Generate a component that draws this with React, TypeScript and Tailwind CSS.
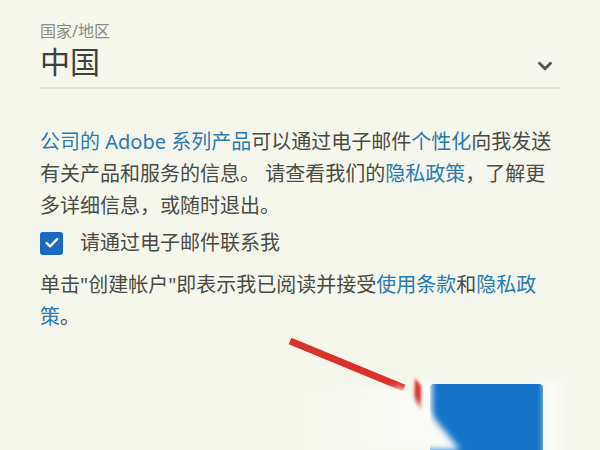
import { ChevronDown, Check } from "lucide-react";

const font = { fontFamily: '"Noto Sans", "Noto Sans CJK SC", sans-serif' };

export default function App() {
  return (
    <div
      className="relative w-[600px] h-[450px] overflow-hidden bg-[#f5f7ec] text-[#4a4b46]"
      style={font}
    >
      <div className="px-10 pt-[21px]">
        {/* country select */}
        <div className="border-b-2 border-[#e3e4da]">
          <div className="text-[16px] leading-[20px] text-[#8a8b85]">国家/地区</div>
          <div className="flex items-center justify-between h-[46px] pb-[4px]">
            <span className="text-[30px] leading-[36px] text-[#3f403b]">中国</span>
            <ChevronDown className="w-[22px] h-[22px] mr-[4px] mt-[8px] text-[#55564f]" strokeWidth={3.2} />
          </div>
        </div>

        <p className="mt-[37px] w-[512px] text-[20px] leading-[32px]">
          <span className="text-[#2b7ab0]">公司的 Adobe 系列产品</span>可以通过电子邮件
          <span className="text-[#2b7ab0]">个性化</span>向我发送有关产品和服务的信息。 请查看我们的
          <span className="text-[#2b7ab0]">隐私政策</span>，了解更多详细信息，或随时退出。
        </p>

        <label className="mt-[9px] flex items-center gap-[17px] text-[20px] leading-[24px]">
          <span className="w-[23px] h-[23px] rounded-[3px] bg-[#1a6bc0] flex items-center justify-center">
            <Check className="w-[16px] h-[16px] text-white" strokeWidth={3.5} />
          </span>
          请通过电子邮件联系我
        </label>

        <p className="mt-[14px] w-[512px] text-[20px] leading-[32px]">
          单击"创建帐户"即表示我已阅读并接受<span className="text-[#2b7ab0]">使用条款</span>和
          <span className="text-[#2b7ab0]">隐私政策</span>。
        </p>

        <div className="mt-[51px] flex justify-end pr-[17px]">
          <button className="w-[113px] h-[80px] rounded-t-[4px] bg-[#1573c8]" />
        </div>
      </div>

      {/* annotation arrow + glare over the button */}
      <svg className="absolute inset-0 pointer-events-none" width="600" height="450">
        <defs>
          <filter id="blur" x="-50%" y="-50%" width="200%" height="200%">
            <feGaussianBlur stdDeviation="3" />
          </filter>
          <filter id="blur2" x="-50%" y="-50%" width="200%" height="200%">
            <feGaussianBlur stdDeviation="1.5" />
          </filter>
          <linearGradient id="fade" x1="300" y1="0" x2="400" y2="0" gradientUnits="userSpaceOnUse">
            <stop offset="0" stopColor="#fbfcf7" stopOpacity="0" />
            <stop offset="1" stopColor="#fbfcf7" stopOpacity="1" />
          </linearGradient>
        </defs>
        <rect x="418" y="380" width="14" height="40" fill="#fbfcf7" filter="url(#blur)" />
        <line x1="290" y1="341" x2="404" y2="388" stroke="#d8322a" strokeWidth="7" />
        <polygon points="415,378 421,386 421,412 414,404" fill="#d8322a" filter="url(#blur2)" />
        <polygon points="300,396 402,388 434,418 460,450 300,450" fill="url(#fade)" filter="url(#blur)" />
        <rect x="544" y="380" width="16" height="80" fill="#fbfcf7" filter="url(#blur)" />
      </svg>
    </div>
  );
}
